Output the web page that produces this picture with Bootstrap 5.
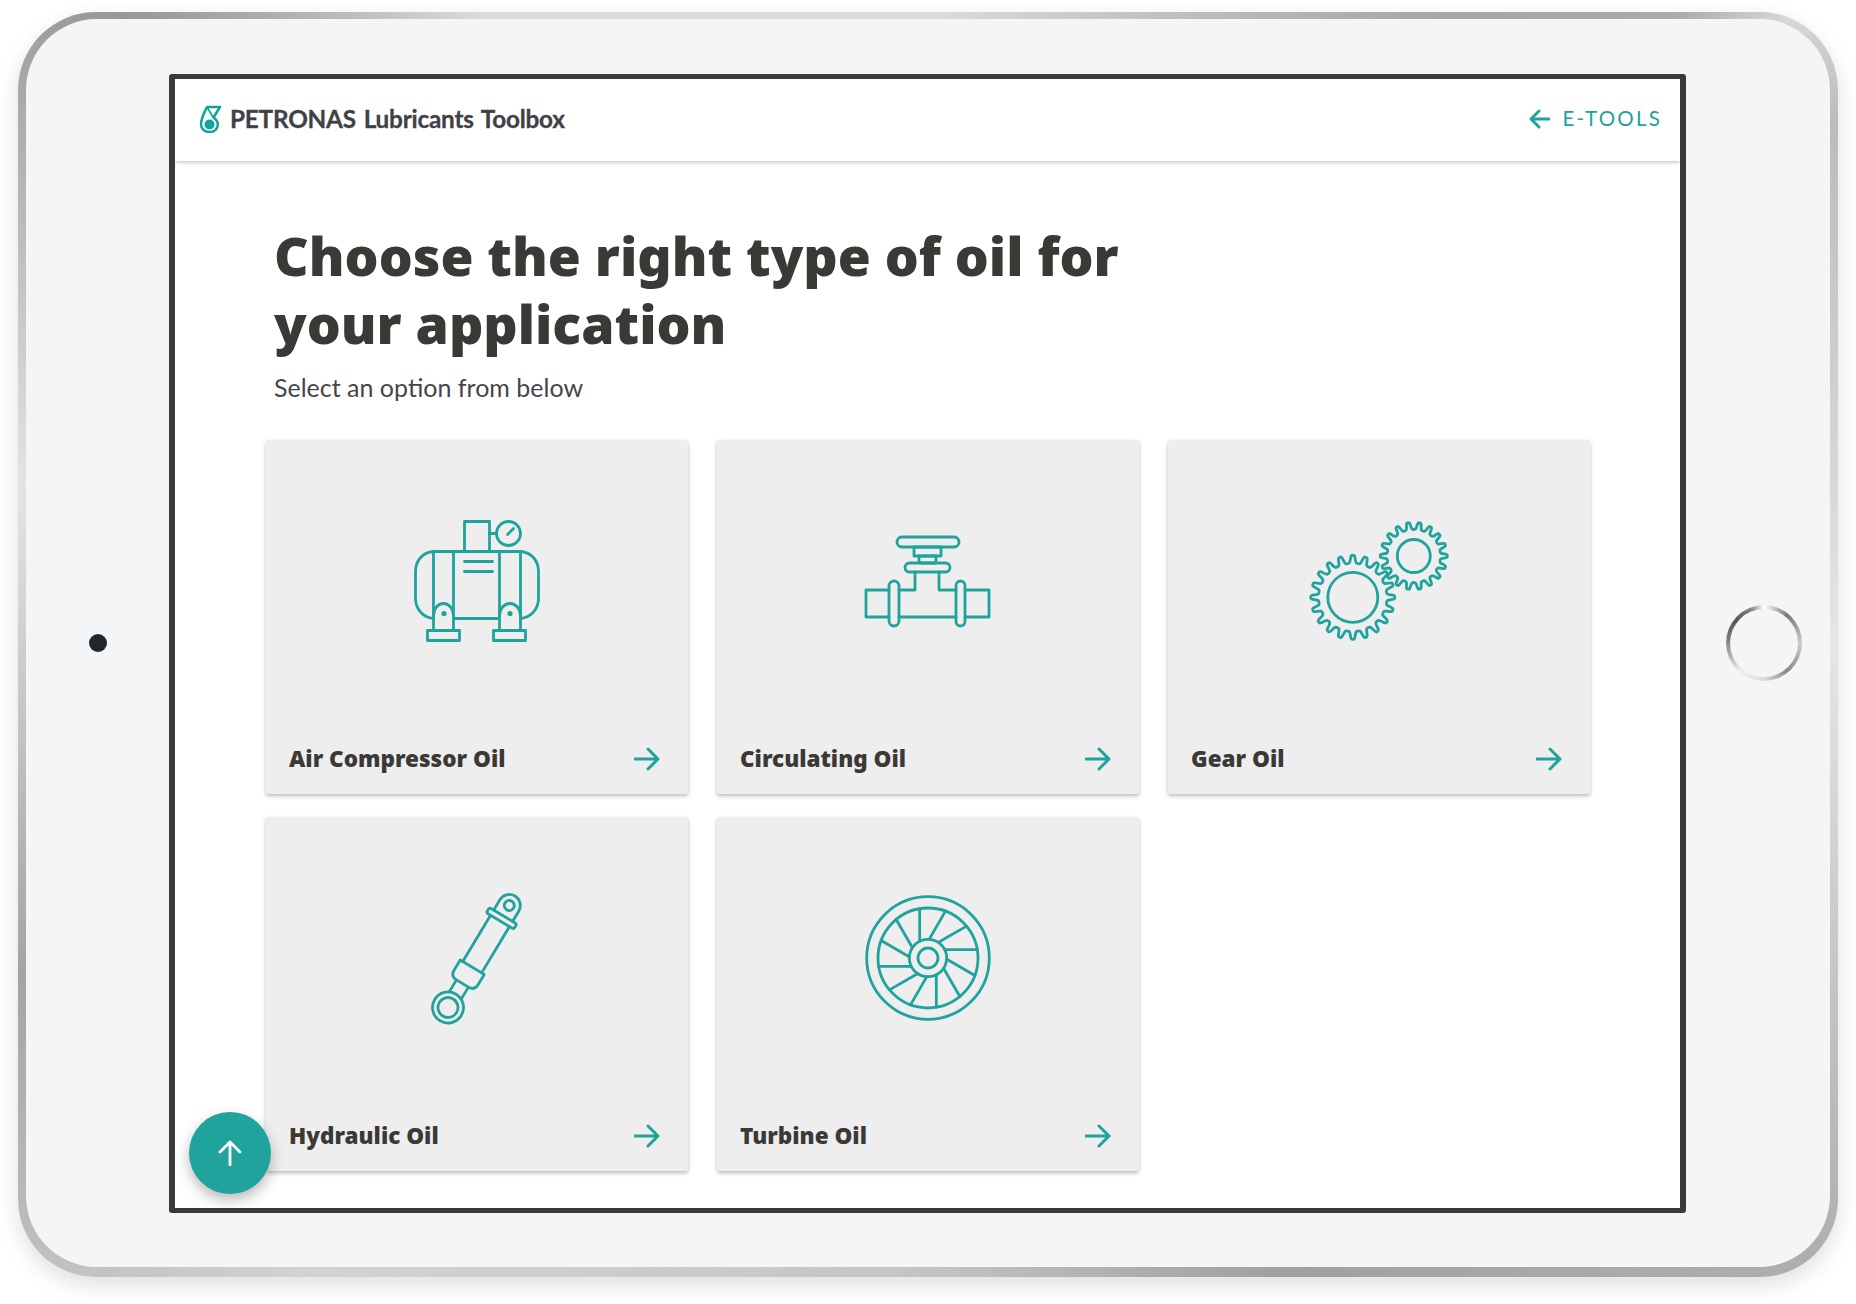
<!doctype html>
<html lang="en">
<head>
<meta charset="utf-8">
<title>PETRONAS Lubricants Toolbox</title>
<link href="https://cdn.jsdelivr.net/npm/bootstrap@5.3.0/dist/css/bootstrap.min.css" rel="stylesheet">
<style>
html,body{height:100%}
body{background:#fff;font-family:Lato,"Liberation Sans",sans-serif;color:#3b3935;overflow:hidden}
.stage{padding:12px 18px 27px}
.shell{height:1265px;padding:7px 8px 10px;border-radius:78px;box-shadow:0 8px 22px rgba(0,0,0,.13);
background:conic-gradient(from 0deg at 50% 50%,#dcdcdc 0deg,#a6a6a6 40deg,#ababab 50deg,#d8d8d8 54deg,#bcbcbc 60deg,#e6e6e6 90deg,#aeaeae 125deg,#a0a0a0 150deg,#c4c4c4 180deg,#d2d2d2 225deg,#a4a4a4 250deg,#e4e4e4 280deg,#979797 308deg,#dcdcdc 325deg,#dcdcdc 360deg)}
.face{height:100%;background:#f4f5f7;border-radius:71px;padding:0 25px 0 0}
.camera{width:18px;height:18px;border-radius:50%;background:#20262c;margin:0 62px 0 63px;flex:none}
.screen{width:1517px;height:1139px;flex:none;border:solid #3a3a3a;border-width:5px 6px;border-radius:3px;background:#fff;position:relative;overflow:hidden}
.homebtn{width:76px;height:76px;flex:none;border-radius:50%;margin-left:40px;padding:4px;
background:conic-gradient(#fff 0deg,#777 40deg,#ccc 90deg,#888 140deg,#ddd 180deg,#eee 220deg,#777 280deg,#555 310deg,#888 340deg,#fff 360deg)}
.homebtn>span{display:block;height:100%;border-radius:50%;background:#f4f5f7}
.topbar{height:82px;padding:0 18px 2px 23px;box-shadow:0 1px 4px rgba(0,0,0,.28)}
.brand{font-size:24.300px;font-weight:700;color:#3f4147;letter-spacing:-.2px;word-spacing:2px;-webkit-text-stroke:.3px #3f4147;padding-top:2px}
.backlink{color:#20a39c;font-size:20.500px;letter-spacing:2.200px;text-decoration:none}
.main{padding:61px 0 0 99px}
.headline{font-family:"Noto Sans",Lato,sans-serif;font-size:53.500px;font-weight:900;line-height:68px;color:#3b3935;margin:0 0 14px}
.sub{font-size:25px;line-height:30px;color:#47454a;margin:0 0 38px}
.tiles{display:grid;grid-template-columns:repeat(3,422px);column-gap:29px;row-gap:23px;margin-left:-8px}
.tile{height:354px;background:#eee;border-radius:3px;box-shadow:0 2px 4px rgba(0,0,0,.28);padding-top:79px;display:flex;flex-direction:column;text-decoration:none}
.tile-art{width:124px;height:124px;overflow:visible;align-self:center;fill:none;stroke:#20a39c;stroke-width:2.800;stroke-linecap:round;stroke-linejoin:round}
.tile-foot{margin-top:auto;padding:0 28px 20px 23px;font-family:"Noto Sans",Lato,sans-serif;font-size:22.500px;font-weight:900;color:#3b3935;line-height:30px}
.arrow{fill:none;stroke:#20a39c;stroke-width:3;stroke-linecap:round;stroke-linejoin:round}
.fab{position:absolute;left:14px;bottom:14px;width:82px;height:82px;border:0;border-radius:50%;background:#20a39c;box-shadow:0 6px 14px rgba(0,0,0,.28)}
</style>
</head>
<body>
<div class="stage">
<div class="shell">
<div class="face d-flex align-items-center">
  <span class="camera"></span>
  <div class="screen">
    <header class="topbar d-flex align-items-center justify-content-between">
      <div class="d-flex align-items-center gap-2">
        <svg width="24" height="28" viewBox="0 0 24 28" aria-hidden="true"><path d="M9 2H22L15.500 12.500C19 15 20.500 18 19.500 21.500 18.500 25 15 27 11.500 27 7 27 3 24 3 19.500 3 13 6 8 9 2Z" fill="none" stroke="#10a39a" stroke-width="2.500" stroke-linejoin="round"/><path d="M9.500 3 15 12" fill="none" stroke="#10a39a" stroke-width="1.600"/><circle cx="11.500" cy="19.500" r="5" fill="#10a39a"/></svg>
        <span class="brand">PETRONAS Lubricants Toolbox</span>
      </div>
      <a class="backlink d-flex align-items-center gap-2" href="#">
        <svg class="arrow me-1" width="21" height="20" viewBox="0 0 21 20"><path d="M20 10H2M10 2 2 10 10 18"/></svg>
        <span>E-TOOLS</span>
      </a>
    </header>
    <main class="main">
      <h1 class="headline">Choose the right type of oil for<br>your application</h1>
      <p class="sub">Select an option from below</p>
      <div class="tiles">
        <a class="tile" href="#">
          <svg class="tile-art" viewBox="34.500 19.500 124 124">
            <rect x="84" y="22" width="25" height="30"/><circle cx="128" cy="34" r="12"/><path d="M109 34h7M127 35l6-6"/>
            <path d="M53 119C42 118 35 109 35 99V72C35 61 42 53 53 52H140C151 53 158 61 158 72V99C158 109 151 118 140 119"/>
            <path d="M53 52V131M73 52V131M119 52V131M140 52V131M73 119H119M84 62h28M84 72h28"/>
            <path d="M53 116a10 12 0 0 1 20 0M119 116a10.500 12 0 0 1 21 0"/>
            <rect x="47" y="131" width="32" height="10"/><rect x="113" y="131" width="32" height="10"/>
            <circle cx="63.500" cy="114" r="1.200"/><circle cx="129.500" cy="114" r="1.200"/>
          </svg>
          <div class="tile-foot d-flex justify-content-between align-items-center"><span>Air Compressor Oil</span><svg class="arrow" width="26" height="24" viewBox="0 0 26 24"><path d="M1 12H24M14 2 24 12 14 22"/></svg></div>
        </a>
        <a class="tile" href="#">
          <svg class="tile-art" viewBox="26 9 124 124">
            <rect x="57" y="27" width="62" height="10" rx="5"/><rect x="74" y="37" width="27" height="9"/><rect x="79" y="46" width="17" height="7"/><rect x="65" y="53" width="45" height="9" rx="4.500"/>
            <path d="M75 62V80H59M99 62V80H116M49 80H26V107H49M125 80H149V107H125M59 107H116"/>
            <rect x="49" y="71" width="10" height="45" rx="5"/><rect x="116" y="71" width="9" height="45" rx="4.500"/>
          </svg>
          <div class="tile-foot d-flex justify-content-between align-items-center"><span>Circulating Oil</span><svg class="arrow" width="26" height="24" viewBox="0 0 26 24"><path d="M1 12H24M14 2 24 12 14 22"/></svg></div>
        </a>
        <a class="tile" href="#">
          <svg class="tile-art" viewBox="27.500 14 124 124">
            <path class="gear" data-cx="63.300" data-cy="92.300" data-n="20" data-ro="42" data-ri="34.500"/>
            <circle cx="63.300" cy="92.300" r="25"/>
            <path class="gear" data-cx="124.300" data-cy="51" data-n="18" data-ro="33.500" data-ri="27"/>
            <circle cx="124.300" cy="51" r="16.500"/>
          </svg>
          <div class="tile-foot d-flex justify-content-between align-items-center"><span>Gear Oil</span><svg class="arrow" width="26" height="24" viewBox="0 0 26 24"><path d="M1 12H24M14 2 24 12 14 22"/></svg></div>
        </a>
        <a class="tile" href="#">
          <svg class="tile-art" viewBox="5 16.500 124 124">
            <g transform="translate(38 128) rotate(31)">
              <circle r="15.500"/><circle r="10"/>
              <path d="M-7-14V-28M7-14V-28"/>
              <path d="M-14-47H14V-35Q14-28 7-28H-7Q-14-28-14-35Z"/>
              <path d="M-11-47V-101M11-47V-101"/>
              <rect x="-16" y="-107" width="32" height="6" rx="2"/>
              <path d="M-11-107V-119A11 11 0 0 1 11-119V-107"/>
              <circle cy="-119" r="5"/>
            </g>
          </svg>
          <div class="tile-foot d-flex justify-content-between align-items-center"><span>Hydraulic Oil</span><svg class="arrow" width="26" height="24" viewBox="0 0 26 24"><path d="M1 12H24M14 2 24 12 14 22"/></svg></div>
        </a>
        <a class="tile" href="#">
          <svg class="tile-art" viewBox="16.300 11.700 124 124">
            <g transform="translate(78.300 73.700)">
              <circle r="61.300"/><circle r="50"/><circle r="18.700"/><circle r="10"/>
              <path d="M-8.300-17V-49.300"/>
              <path transform="rotate(30)" d="M-8.300-17V-49.300"/><path transform="rotate(60)" d="M-8.300-17V-49.300"/><path transform="rotate(90)" d="M-8.300-17V-49.300"/>
              <path transform="rotate(120)" d="M-8.300-17V-49.300"/><path transform="rotate(150)" d="M-8.300-17V-49.300"/><path transform="rotate(180)" d="M-8.300-17V-49.300"/>
              <path transform="rotate(210)" d="M-8.300-17V-49.300"/><path transform="rotate(240)" d="M-8.300-17V-49.300"/><path transform="rotate(270)" d="M-8.300-17V-49.300"/>
              <path transform="rotate(300)" d="M-8.300-17V-49.300"/><path transform="rotate(330)" d="M-8.300-17V-49.300"/>
            </g>
          </svg>
          <div class="tile-foot d-flex justify-content-between align-items-center"><span>Turbine Oil</span><svg class="arrow" width="26" height="24" viewBox="0 0 26 24"><path d="M1 12H24M14 2 24 12 14 22"/></svg></div>
        </a>
      </div>
    </main>
    <button class="fab d-flex align-items-center justify-content-center" type="button" aria-label="Back to top">
      <svg width="24" height="26" viewBox="0 0 24 26" fill="none" stroke="#fff" stroke-width="2.800" stroke-linecap="round" stroke-linejoin="round"><path d="M12 25V2M2 12 12 2 22 12"/></svg>
    </button>
  </div>
  <span class="homebtn"><span></span></span>
</div>
</div>
</div>
<script src="https://cdn.jsdelivr.net/npm/bootstrap@5.3.0/dist/js/bootstrap.bundle.min.js"></script>
<script>
document.querySelectorAll('.gear').forEach(function(g){
  var cx=+g.dataset.cx,cy=+g.dataset.cy,n=+g.dataset.n,ro=+g.dataset.ro,ri=+g.dataset.ri,d='';
  function p(r,t){return (cx+r*Math.cos(t)).toFixed(2)+' '+(cy+r*Math.sin(t)).toFixed(2)}
  for(var i=0;i<n;i++){
    var a=i*2*Math.PI/n,s=2*Math.PI/n;
    d+=(i?'':'M'+p(ri,a-s*.32))+'C'+p(ri+(ro-ri)*.3,a-s*.16)+' '+p(ro+1,a-s*.22)+' '+p(ro,a)+'C'+p(ro+1,a+s*.22)+' '+p(ri+(ro-ri)*.3,a+s*.16)+' '+p(ri,a+s*.32)+'Q'+p(ri-1,a+s*.5)+' '+p(ri,a+s*.68);
  }
  g.setAttribute('d',d+'Z');
});
</script>
</body>
</html>
